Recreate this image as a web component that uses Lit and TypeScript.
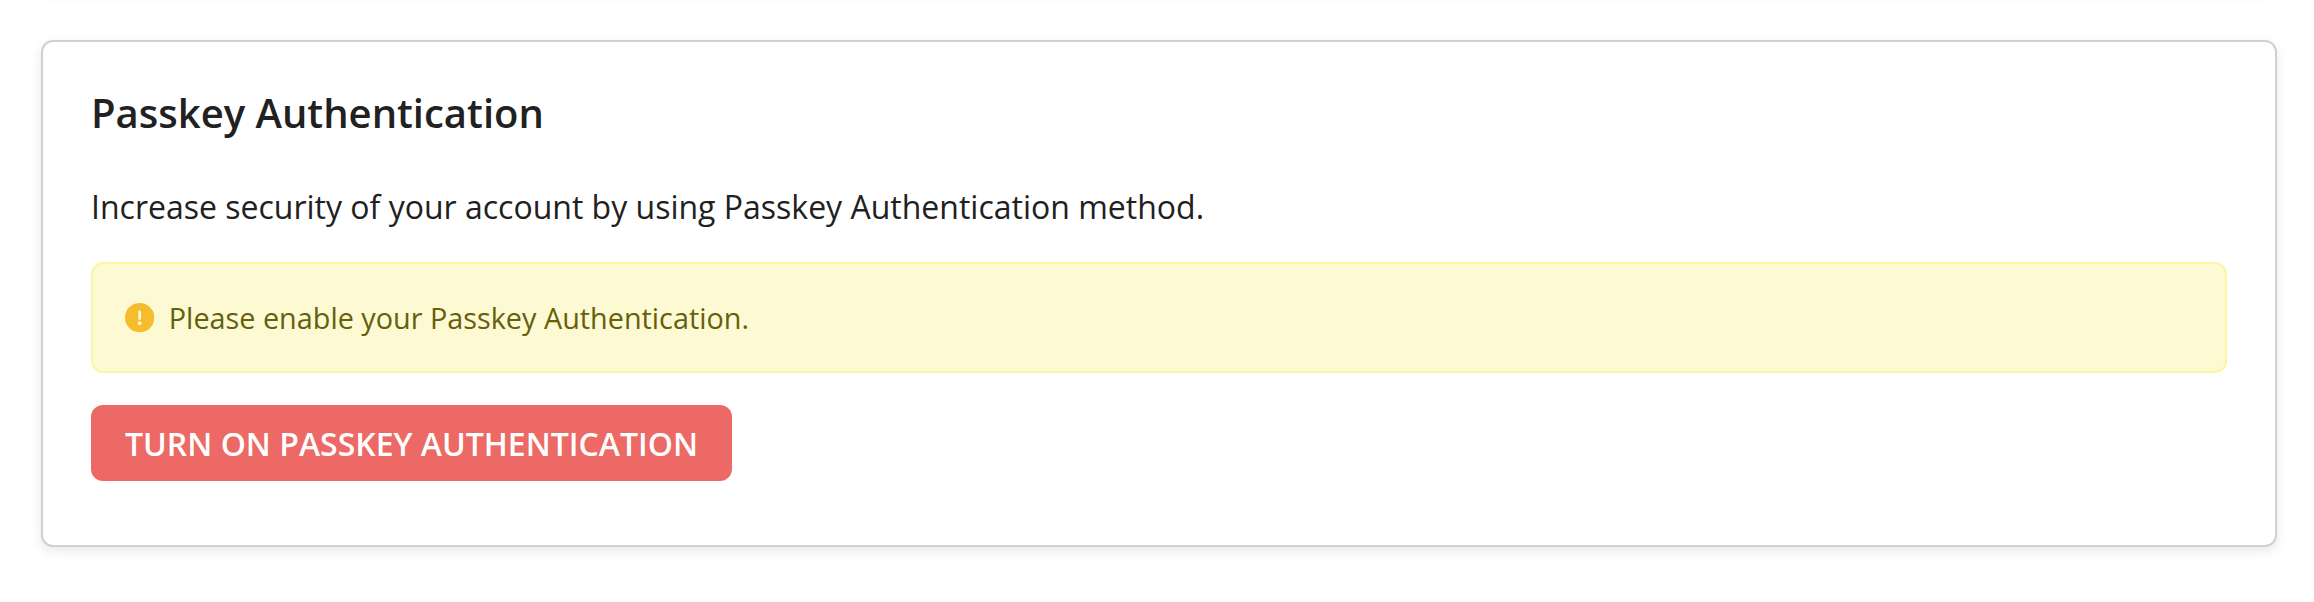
import { LitElement, html, css } from "lit";
import { customElement } from "lit/decorators.js";

@customElement("app-root")
export class AppRoot extends LitElement {
  static styles = css`
    :host { display: block; height: 602px; box-sizing: border-box; padding: 40px 37px 0 41px; background: linear-gradient(#fbfbfb, #fff) center top / calc(100% - 94px) 3px no-repeat #fff; font-family: "Open Sans", sans-serif; color: #212121; }
    .card { box-sizing: border-box; height: 507px; border: 2px solid #d0d0d0; border-radius: 12px; padding: 47px 48px 0; background: #fff; box-shadow: 0 4px 12px rgba(0,0,0,.09); }
    h2 { margin: 0; font-size: 40px; line-height: 48px; font-weight: 600; }
    p { margin: 46px 0 0; font-size: 32px; line-height: 48px; }
    .alert { box-sizing: border-box; display: flex; align-items: center; gap: 15px; height: 111px; margin-top: 31px; padding: 0 32px 0 31.5px; border: 2px solid #fcf5a4; border-radius: 12px; background: #fdf9d3; color: #665f0c; font-size: 28.8px; }
    .icon { width: 29.3px; height: 29.3px; flex: none; margin-top: 1px; }
    button { display: block; box-sizing: border-box; height: 76px; margin-top: 32px; padding: 1px 34px 0; border: 0; border-radius: 12px; background: #ec6965; color: #fff; font: 600 32px/49px "Open Sans", sans-serif; text-transform: uppercase; }
  `;
  render() {
    return html`<section class="card">
      <h2>Passkey Authentication</h2>
      <p>Increase security of your account by using Passkey Authentication method.</p>
      <div class="alert" role="alert">
        <svg class="icon" viewBox="0 0 30 30"><circle cx="15" cy="15" r="15" fill="#f5bd2e"/><path d="M15 9v7" stroke="#fdf9d3" stroke-width="2.8" stroke-linecap="round"/><circle cx="15" cy="20.7" r="1.9" fill="#fdf9d3"/></svg>
        <span>Please enable your Passkey Authentication.</span>
      </div>
      <button>Turn on Passkey Authentication</button>
    </section>`;
  }
}
